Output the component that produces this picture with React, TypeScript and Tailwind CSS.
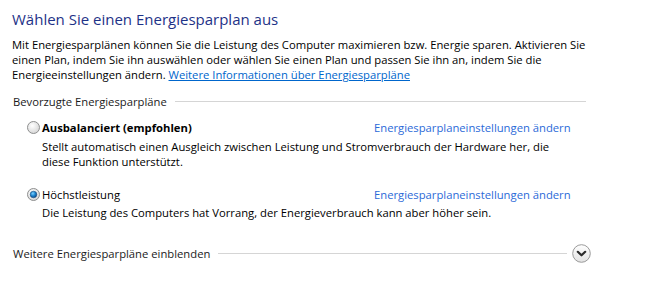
import React from 'react';

const font = { fontFamily: '"Open Sans", "Noto Sans", sans-serif' };

function Radio({ checked }: { checked?: boolean }) {
  return (
    <svg width="13" height="13" viewBox="0 0 13 13" className="shrink-0">
      <defs>
        <radialGradient id={checked ? 'rOn' : 'rOff'} cx="0.4" cy="0.35" r="0.7">
          <stop offset="0" stopColor="#ffffff" />
          <stop offset="1" stopColor="#d4d4d4" />
        </radialGradient>
        <radialGradient id="dot" cx="0.4" cy="0.35" r="0.7">
          <stop offset="0" stopColor="#7fd0ff" />
          <stop offset="0.5" stopColor="#1c86d0" />
          <stop offset="1" stopColor="#0b3f80" />
        </radialGradient>
      </defs>
      <circle cx="6.5" cy="6.5" r="6" fill={checked ? 'url(#rOn)' : 'url(#rOff)'} stroke="#8e8f8f" strokeWidth="1" />
      {checked && <circle cx="6.5" cy="6.5" r="3.3" fill="url(#dot)" stroke="#1d4f7f" strokeWidth="0.6" />}
    </svg>
  );
}

function Chevron() {
  return (
    <svg width="19" height="19" viewBox="0 0 19 19" className="shrink-0">
      <defs>
        <linearGradient id="cbg" x1="0" y1="0" x2="0" y2="1">
          <stop offset="0" stopColor="#ffffff" />
          <stop offset="1" stopColor="#e2e2e2" />
        </linearGradient>
      </defs>
      <circle cx="9.5" cy="9.5" r="8.8" fill="url(#cbg)" stroke="#9a9a9a" strokeWidth="1" />
      <path d="M5.8 7.8 L9.5 11.3 L13.2 7.8" fill="none" stroke="#2b2b2b" strokeWidth="2.2" strokeLinecap="round" strokeLinejoin="round" />
    </svg>
  );
}

function Plan({ title, bold, checked, desc }: { title: string; bold?: boolean; checked?: boolean; desc: React.ReactNode }) {
  return (
    <div>
      <div className="flex items-center h-[15px] leading-[15px]">
        <div className="w-[362px] flex items-center pl-[15px] gap-[2px]">
          <Radio checked={checked} />
          <span className={bold ? 'font-bold text-[#000]' : 'text-[#000]'}>{title}</span>
        </div>
        <span className="text-[#2b6ad8]">Energiesparplaneinstellungen ändern</span>
      </div>
      <div className="pl-[30px] leading-[15px] mt-[4px] text-[#000]">{desc}</div>
    </div>
  );
}

export default function App() {
  return (
    <div className="w-[656px] h-[286px] bg-white pt-[9px] pl-[12px] text-[11.25px] whitespace-nowrap" style={font}>
      <div className="text-[15px] leading-[20px] text-[#1e3287]">Wählen Sie einen Energiesparplan aus</div>
      <div className="mt-[8px] leading-[15px] text-[#000]">
        <div>Mit Energiesparplänen können Sie die Leistung des Computer maximieren bzw. Energie sparen. Aktivieren Sie</div>
        <div>einen Plan, indem Sie ihn auswählen oder wählen Sie einen Plan und passen Sie ihn an, indem Sie die</div>
        <div>
          Energieeinstellungen ändern. <span className="text-[#0066cc] underline">Weitere Informationen über Energiesparpläne</span>
        </div>
      </div>

      <div className="mt-[12px] w-[574px] flex items-center h-[15px] leading-[15px] pl-[1px]">
        <span className="text-[#1b1b1b]">Bevorzugte Energiesparpläne</span>
        <div className="flex-1 h-px bg-[#d5d5d5] ml-[8px]" />
      </div>

      <div className="mt-[11px]">
        <Plan
          title="Ausbalanciert (empfohlen)"
          bold
          desc={
            <>
              <div>Stellt automatisch einen Ausgleich zwischen Leistung und Stromverbrauch der Hardware her, die</div>
              <div>diese Funktion unterstützt.</div>
            </>
          }
        />
      </div>
      <div className="mt-[18px]">
        <Plan
          title="Höchstleistung"
          checked
          desc={<div className="-mt-[1px]">Die Leistung des Computers hat Vorrang, der Energieverbrauch kann aber höher sein.</div>}
        />
      </div>

      <div className="mt-[26px] w-[579px] flex items-center h-[15px] leading-[15px] pl-[1px]">
        <span className="text-[#1b1b1b]">Weitere Energiesparpläne einblenden</span>
        <div className="flex-1 h-px bg-[#d5d5d5] ml-[8px] mr-[5px]" />
        <Chevron />
      </div>
    </div>
  );
}
